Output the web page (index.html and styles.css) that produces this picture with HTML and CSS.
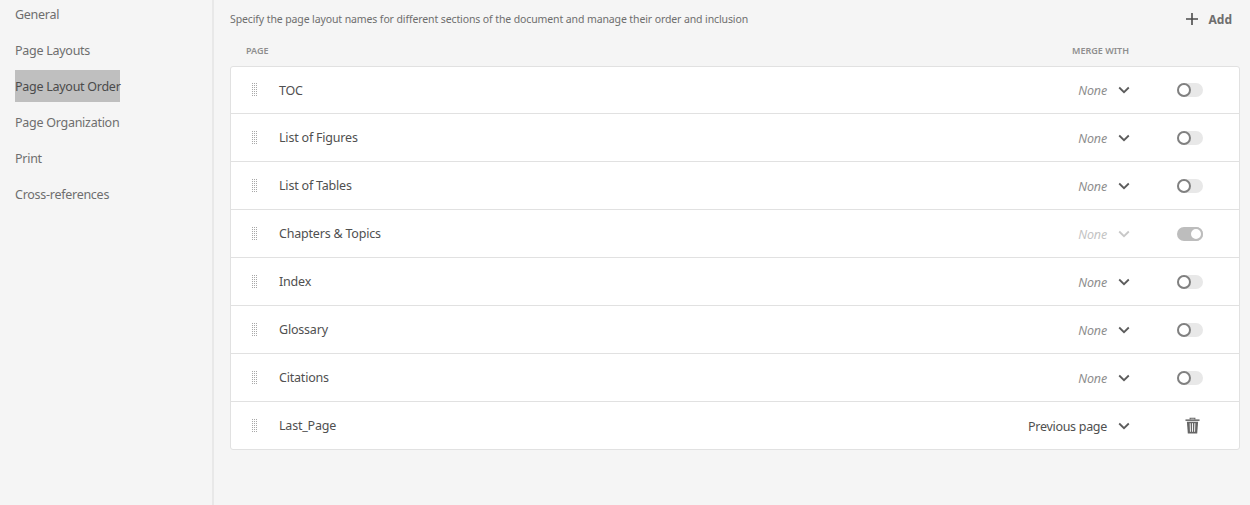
FILE: index.html
```html
<!DOCTYPE html>
<html lang="en">

<head>
  <meta charset="UTF-8" />
  <title>Page Layout Order</title>
  <link rel="stylesheet" href="styles.css">
</head>

<body>
  <svg class="defs" width="0" height="0">
    <symbol id="grip" viewBox="0 0 8 14">
      <g fill="#a8a8a8">
        <rect x="1" y="0" width="1" height="1" /><rect x="3" y="0" width="1" height="1" /><rect x="5" y="0" width="1" height="1" />
        <rect x="1" y="2" width="1" height="1" /><rect x="3" y="2" width="1" height="1" /><rect x="5" y="2" width="1" height="1" />
        <rect x="1" y="4" width="1" height="1" /><rect x="3" y="4" width="1" height="1" /><rect x="5" y="4" width="1" height="1" />
        <rect x="1" y="6" width="1" height="1" /><rect x="3" y="6" width="1" height="1" /><rect x="5" y="6" width="1" height="1" />
        <rect x="1" y="8" width="1" height="1" /><rect x="3" y="8" width="1" height="1" /><rect x="5" y="8" width="1" height="1" />
        <rect x="1" y="10" width="1" height="1" /><rect x="3" y="10" width="1" height="1" /><rect x="5" y="10" width="1" height="1" />
        <rect x="1" y="12" width="1" height="1" /><rect x="3" y="12" width="1" height="1" /><rect x="5" y="12" width="1" height="1" />
      </g>
    </symbol>
    <symbol id="chevron" viewBox="0 0 12 8">
      <path d="M1.2 1.5 L6 6.2 L10.8 1.5" fill="none" stroke="currentColor" stroke-width="1.8" />
    </symbol>
  </svg>

  <div class="layout">
    <!-- Left menu -->
    <nav class="sidebar">
      <a class="nav-item">General</a>
      <a class="nav-item">Page Layouts</a>
      <a class="nav-item selected">Page Layout Order</a>
      <a class="nav-item">Page Organization</a>
      <a class="nav-item">Print</a>
      <a class="nav-item">Cross-references</a>
    </nav>

    <main class="content">
      <div class="top-bar">
        <p class="description">Specify the page layout names for different sections of the document and manage their order and inclusion</p>
        <button class="add-btn">
          <svg class="plus-icon" viewBox="0 0 12 12"><path d="M6 0 V12 M0 6 H12" stroke="#4b4b4b" stroke-width="1.6" /></svg>
          Add
        </button>
      </div>

      <div class="table-head">
        <span class="col-page">PAGE</span>
        <span class="col-merge">MERGE WITH</span>
      </div>

      <div class="rows">
        <div class="row first">
          <svg class="grip"><use href="#grip" /></svg>
          <span class="name">TOC</span>
          <span class="merge none">None</span>
          <svg class="chevron"><use href="#chevron" /></svg>
          <span class="action"><span class="toggle"></span></span>
        </div>
        <div class="row">
          <svg class="grip"><use href="#grip" /></svg>
          <span class="name">List of Figures</span>
          <span class="merge none">None</span>
          <svg class="chevron"><use href="#chevron" /></svg>
          <span class="action"><span class="toggle"></span></span>
        </div>
        <div class="row">
          <svg class="grip"><use href="#grip" /></svg>
          <span class="name">List of Tables</span>
          <span class="merge none">None</span>
          <svg class="chevron"><use href="#chevron" /></svg>
          <span class="action"><span class="toggle"></span></span>
        </div>
        <div class="row">
          <svg class="grip"><use href="#grip" /></svg>
          <span class="name">Chapters &amp; Topics</span>
          <span class="merge none disabled">None</span>
          <svg class="chevron disabled"><use href="#chevron" /></svg>
          <span class="action"><span class="toggle on"></span></span>
        </div>
        <div class="row">
          <svg class="grip"><use href="#grip" /></svg>
          <span class="name">Index</span>
          <span class="merge none">None</span>
          <svg class="chevron"><use href="#chevron" /></svg>
          <span class="action"><span class="toggle"></span></span>
        </div>
        <div class="row">
          <svg class="grip"><use href="#grip" /></svg>
          <span class="name">Glossary</span>
          <span class="merge none">None</span>
          <svg class="chevron"><use href="#chevron" /></svg>
          <span class="action"><span class="toggle"></span></span>
        </div>
        <div class="row">
          <svg class="grip"><use href="#grip" /></svg>
          <span class="name">Citations</span>
          <span class="merge none">None</span>
          <svg class="chevron"><use href="#chevron" /></svg>
          <span class="action"><span class="toggle"></span></span>
        </div>
        <div class="row last">
          <svg class="grip"><use href="#grip" /></svg>
          <span class="name">Last_Page</span>
          <span class="merge">Previous page</span>
          <svg class="chevron"><use href="#chevron" /></svg>
          <span class="action">
            <svg class="trash" viewBox="0 0 16 17">
              <path d="M5.5 2.2 V0.8 H10.5 V2.2" fill="none" stroke="#666" stroke-width="1.2" />
              <rect x="0.5" y="2" width="15" height="1.6" fill="#666" />
              <path d="M2 4.4 H14 L13 17 H3 Z" fill="#666" />
              <path d="M5.5 6 L5.8 15.2 M8 6 V15.2 M10.5 6 L10.2 15.2" stroke="#fff" stroke-width="1" />
            </svg>
          </span>
        </div>
      </div>
    </main>
  </div>
</body>

</html>
```

FILE: styles.css
```css
*, *::after {
  box-sizing: border-box;
}

body {
  margin: 0;
  height: 505px;
  overflow: hidden;
  background: #f5f5f5;
  font-family: "Noto Sans", sans-serif;
  font-size: 12.5px;
  letter-spacing: -0.2px;
  color: #505050;
}

.defs {
  position: absolute;
}

.layout {
  display: flex;
  height: 100%;
}

.sidebar {
  width: 214px;
  flex-shrink: 0;
  border-right: 2px solid #e8e8e8;
  display: flex;
  flex-direction: column;
  align-items: flex-start;
  padding-left: 15px;
  letter-spacing: -0.27px;
}

.nav-item {
  height: 36px;
  line-height: 34px;
  color: #6e6e6e;
  white-space: nowrap;
}

.nav-item:first-child {
  margin-top: -2px;
}

.nav-item.selected {
  width: 105px;
  height: 32px;
  margin-bottom: 4px;
  background: #bfbfbf;
  color: #4b4b4b;
}

.content {
  flex: 1;
  padding: 0 10px 0 16px;
}

.top-bar {
  display: flex;
  justify-content: space-between;
  align-items: center;
  height: 38px;
}

.description {
  margin: 0;
  font-size: 10.5px;
  letter-spacing: -0.11px;
  color: #6e6e6e;
}

.add-btn {
  display: flex;
  align-items: center;
  gap: 11px;
  margin-right: 8px;
  padding: 0;
  border: none;
  background: transparent;
  font-family: inherit;
  font-size: 12px;
  font-weight: 700;
  color: #6e6e6e;
}

.plus-icon {
  width: 12px;
  height: 12px;
}

.table-head {
  display: flex;
  justify-content: space-between;
  align-items: center;
  height: 28px;
  padding: 0 111px 3px 16px;
  font-size: 9px;
  font-weight: 600;
  letter-spacing: 0;
  color: #8e8e8e;
}

.rows {
  background: #fff;
  border: 1px solid #e1e1e1;
  border-radius: 3px;
}

.row {
  display: flex;
  align-items: center;
  height: 48px;
  border-bottom: 1px solid #e1e1e1;
  padding-left: 20px;
}

.row.first {
  height: 47px;
}

.row.last {
  border-bottom: none;
  height: 47px;
}

.grip {
  width: 8px;
  height: 14px;
}

.name {
  flex: 1;
  margin-left: 20px;
}

.merge {
  font-size: 12.5px;
  letter-spacing: -0.3px;
  padding-top: 1px;
}

.none {
  font-style: italic;
  color: #8e8e8e;
  letter-spacing: -0.15px;
}

.none.disabled {
  color: #c4c4c4;
}

.chevron {
  width: 12px;
  height: 8px;
  margin-left: 11px;
  color: #5c5c5c;
}

.chevron.disabled {
  color: #c8c8c8;
}

.action {
  width: 109px;
  display: flex;
  padding-left: 47px;
}

.toggle {
  position: relative;
  width: 26px;
  height: 14px;
  border-radius: 7px;
  background: #e8e8e8;
}

.toggle::after {
  content: "";
  position: absolute;
  left: 0;
  top: 0;
  width: 14px;
  height: 14px;
  border-radius: 50%;
  border: 2px solid #808080;
  background: #fff;
}

.toggle.on {
  background: #bdbdbd;
}

.toggle.on::after {
  left: 12px;
  border-color: #bdbdbd;
}

.trash {
  width: 15px;
  height: 17px;
  margin-left: 8px;
}
```
